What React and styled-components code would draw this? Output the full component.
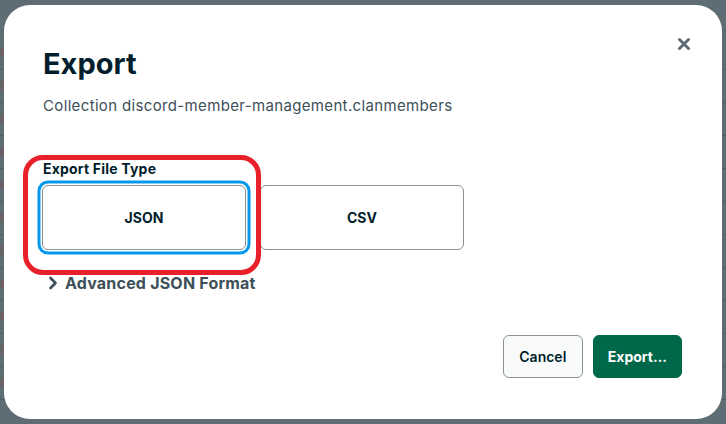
import React from "react";
import styled, { createGlobalStyle } from "styled-components";

const GlobalStyle = createGlobalStyle`
    html, body {
        margin: 0;
        padding: 0;
        width: 726px;
        height: 424px;
        overflow: hidden;
        font-family: Inter, Lato, sans-serif;
    }
`;

const Backdrop = styled.div`
    position: relative;
    width: 726px;
    height: 424px;
    background-color: rgb(94, 109, 116);
    overflow: hidden;
`;

const BgTable = styled.div`
    display: flex;
    flex-direction: column;
    padding-top: 37px;
`;

const BgRow = styled.div`
    height: 32px;
    border-bottom: 1px solid rgba(70, 84, 92, 0.6);
    font-family: "DejaVu Sans Mono", monospace;
    font-size: 13px;
    line-height: 32px;
    display: flex;
    gap: 60px;
`;

const BgCell = styled.span`
    color: ${p => p.color || "rgba(140, 70, 70, 0.7)"};
    width: ${p => p.w || "auto"};
`;

const Modal = styled.div`
    position: absolute;
    left: 4px;
    top: 5px;
    width: 718px;
    height: 414px;
    background: #fff;
    border-radius: 26px;
    box-sizing: border-box;
    padding: 42px 40px 0 38px;
    display: flex;
    flex-direction: column;
    color: #001e2b;
`;

const CloseButton = styled.button`
    position: absolute;
    right: 30px;
    top: 31px;
    width: 16px;
    height: 16px;
    padding: 0;
    border: none;
    background: none;
    display: flex;
    align-items: center;
    justify-content: center;
`;

const Title = styled.h1`
    margin: 0 0 0 1px;
    font-size: 29px;
    font-weight: 700;
    line-height: 34px;
    color: #001e2b;
`;

const Subtitle = styled.p`
    margin: 15px 0 0 1px;
    font-size: 15px;
    line-height: 20px;
    letter-spacing: 0.35px;
    color: #3d4f58;
`;

const Section = styled.div`
    position: relative;
    margin-top: 44px;
    display: flex;
    flex-direction: column;
`;

const Label = styled.div`
    margin-left: 1px;
    font-size: 14px;
    font-weight: 700;
    line-height: 18px;
    letter-spacing: 0.2px;
    color: #001e2b;
`;

const Options = styled.div`
    display: flex;
    gap: 14px;
    margin-top: 7px;
`;

const Option = styled.button`
    width: 204px;
    height: 65px;
    box-sizing: border-box;
    background: #fff;
    border: 1px solid #889397;
    border-radius: 6px;
    font-family: Inter, sans-serif;
    font-size: 14px;
    font-weight: 700;
    color: #001e2b;
    box-shadow: ${p => (p.focused ? "0 0 0 1.5px #fff, 0 0 0 4.5px #0498ec" : "none")};
`;

const Annotation = styled.div`
    position: absolute;
    left: -19px;
    top: -5px;
    width: 238px;
    height: 120px;
    border: 5px solid #e8202a;
    border-radius: 20px;
    box-sizing: border-box;
    pointer-events: none;
`;

const Advanced = styled.div`
    display: flex;
    align-items: center;
    gap: 7px;
    margin-top: 23px;
    padding-left: 6px;
    font-size: 16px;
    font-weight: 700;
    letter-spacing: 0.2px;
    color: #3d4f58;
`;

const Footer = styled.div`
    display: flex;
    justify-content: flex-end;
    gap: 10px;
    margin-top: 42px;
`;

const FooterButton = styled.button`
    height: 43px;
    box-sizing: border-box;
    padding: 0 ${p => (p.primary ? "14px" : "15.5px")};
    border-radius: 6px;
    border: 1px solid ${p => (p.primary ? "#00684a" : "#889397")};
    background: ${p => (p.primary ? "#00684a" : "#f9fbfa")};
    color: ${p => (p.primary ? "#fff" : "#001e2b")};
    font-family: Inter, sans-serif;
    font-size: 14px;
    font-weight: ${p => (p.primary ? 700 : 600)};
`;

const rows = Array.from({ length: 11 });

const App = () => {
    return (
        <>
            <GlobalStyle />
            <Backdrop>
                <BgTable>
                    {rows.map((_, i) => (
                        <BgRow key={i}>
                            <BgCell w="60px">{i === 10 ? "8890…" : "8"}</BgCell>
                            {i === 10 && (
                                <>
                                    <BgCell color="rgba(40, 90, 80, 0.8)" w="260px">
                                        1292304010
                                    </BgCell>
                                    <BgCell color="rgba(40, 60, 70, 0.8)" w="200px">
                                        9 [0] 0
                                    </BgCell>
                                    <BgCell color="rgba(40, 60, 70, 0.8)">
                                        [] 165 elements
                                    </BgCell>
                                </>
                            )}
                        </BgRow>
                    ))}
                </BgTable>
                <Modal>
                    <CloseButton aria-label="close">
                        <svg width="14" height="14" viewBox="0 0 14 14">
                            <path
                                d="M2.5 2.5 L11.5 11.5 M11.5 2.5 L2.5 11.5"
                                stroke="#5c6c75"
                                strokeWidth="3"
                                strokeLinecap="round"
                            />
                        </svg>
                    </CloseButton>
                    <Title>Export</Title>
                    <Subtitle>Collection discord-member-management.clanmembers</Subtitle>
                    <Section>
                        <Label>Export File Type</Label>
                        <Options>
                            <Option focused>JSON</Option>
                            <Option>CSV</Option>
                        </Options>
                        <Annotation />
                    </Section>
                    <Advanced>
                        <svg width="10" height="14" viewBox="0 0 10 14">
                            <path
                                d="M2.5 2 L7.5 7 L2.5 12"
                                fill="none"
                                stroke="#3d4f58"
                                strokeWidth="2.6"
                                strokeLinecap="round"
                                strokeLinejoin="round"
                            />
                        </svg>
                        Advanced JSON Format
                    </Advanced>
                    <Footer>
                        <FooterButton>Cancel</FooterButton>
                        <FooterButton primary>Export...</FooterButton>
                    </Footer>
                </Modal>
            </Backdrop>
        </>
    );
};

export default App;
